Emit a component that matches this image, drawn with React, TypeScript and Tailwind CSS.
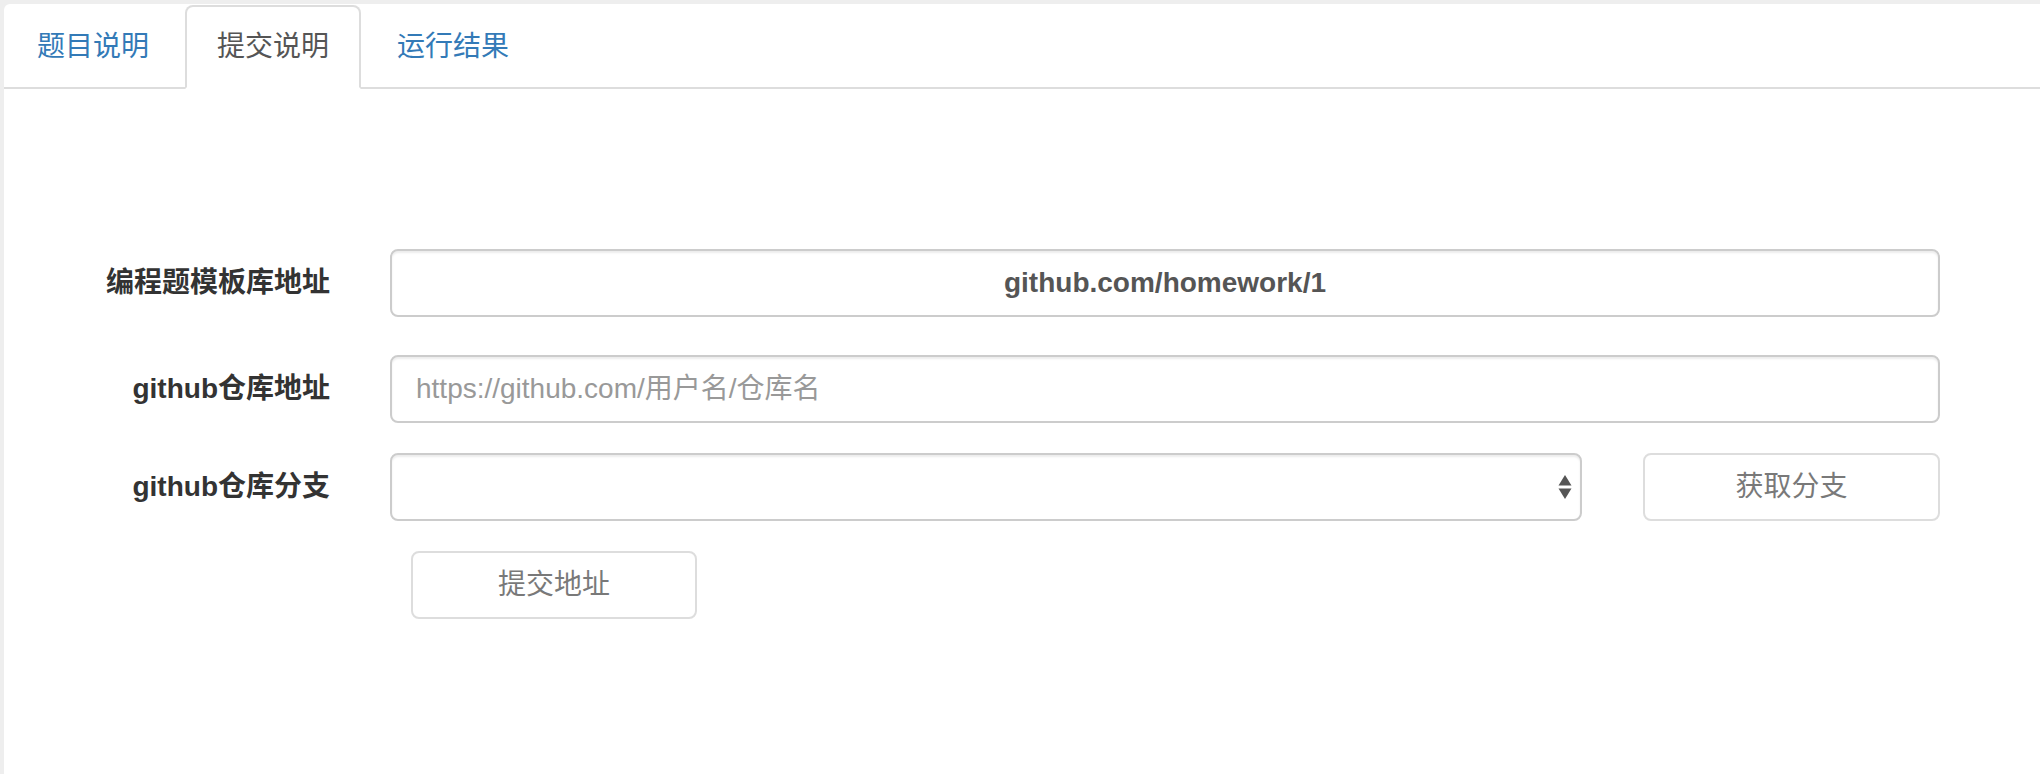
import React from "react";

const font = { fontFamily: '"Liberation Sans", "Noto Sans CJK SC", sans-serif' };

function Tab({ label, active }: { label: string; active?: boolean }) {
  if (active) {
    return (
      <li className="mr-[4px] -mb-[2px]">
        <div className="h-[84px] px-[30px] flex items-center border-2 border-[#dddddd] border-b-transparent rounded-t-[8px] bg-white text-[#555555] text-[28px] leading-[40px]">
          {label}
        </div>
      </li>
    );
  }
  return (
    <li className="mr-[4px] -mb-[2px]">
      <div className="h-[84px] px-[30px] flex items-center border-2 border-transparent text-[#337ab7] text-[28px] leading-[40px]">
        {label}
      </div>
    </li>
  );
}

function Label({ children }: { children: React.ReactNode }) {
  return (
    <div className="w-[326px] shrink-0 text-right font-bold text-[28px] leading-[40px] text-[#333333]">
      {children}
    </div>
  );
}

export default function App() {
  return (
    <div className="w-full h-[774px] bg-[#eeeeee] pt-[4px] pl-[4px] overflow-hidden" style={font}>
      <div className="h-full bg-white rounded-tl-[6px]">
        <ul className="flex pl-[1px] pt-[1px] border-b-2 border-[#dddddd]">
          <Tab label="题目说明" />
          <Tab label="提交说明" active />
          <Tab label="运行结果" />
        </ul>

        <div className="pt-[160px] pr-[100px]">
          <div className="flex items-center mb-[38px]">
            <Label>编程题模板库地址</Label>
            <div className="ml-[60px] flex-1 h-[68px] border-2 border-[#cccccc] rounded-[8px] shadow-[inset_0_2px_2px_rgba(0,0,0,0.075)] flex items-center justify-center font-bold text-[28px] text-[#555555]">
              github.com/homework/1
            </div>
          </div>

          <div className="flex items-center mb-[30px]">
            <Label>github仓库地址</Label>
            <input
              className="ml-[60px] flex-1 h-[68px] border-2 border-[#cccccc] rounded-[8px] shadow-[inset_0_2px_2px_rgba(0,0,0,0.075)] px-[24px] text-[28px] text-[#555555] placeholder:text-[#999999] outline-none"
              placeholder="https://github.com/用户名/仓库名"
              style={font}
            />
          </div>

          <div className="flex items-center mb-[30px]">
            <Label>github仓库分支</Label>
            <div className="ml-[60px] flex-1 h-[68px] border-2 border-[#cccccc] rounded-[8px] shadow-[inset_0_2px_2px_rgba(0,0,0,0.075)] flex items-center justify-end pr-[8px]">
              <svg width="14" height="24" viewBox="0 0 14 24">
                <polygon points="7,0 13.5,10.5 0.5,10.5" fill="#555555" />
                <polygon points="0.5,13.5 13.5,13.5 7,24" fill="#555555" />
              </svg>
            </div>
            <div className="ml-[61px] w-[297px] h-[68px] border-2 border-[#cccccc] rounded-[8px] bg-white opacity-65 flex items-center justify-center text-[28px] text-[#333333]">
              获取分支
            </div>
          </div>

          <div className="flex">
            <div className="ml-[407px] w-[286px] h-[68px] border-2 border-[#cccccc] rounded-[8px] bg-white opacity-65 flex items-center justify-center text-[28px] text-[#333333]">
              提交地址
            </div>
          </div>
        </div>
      </div>
    </div>
  );
}
